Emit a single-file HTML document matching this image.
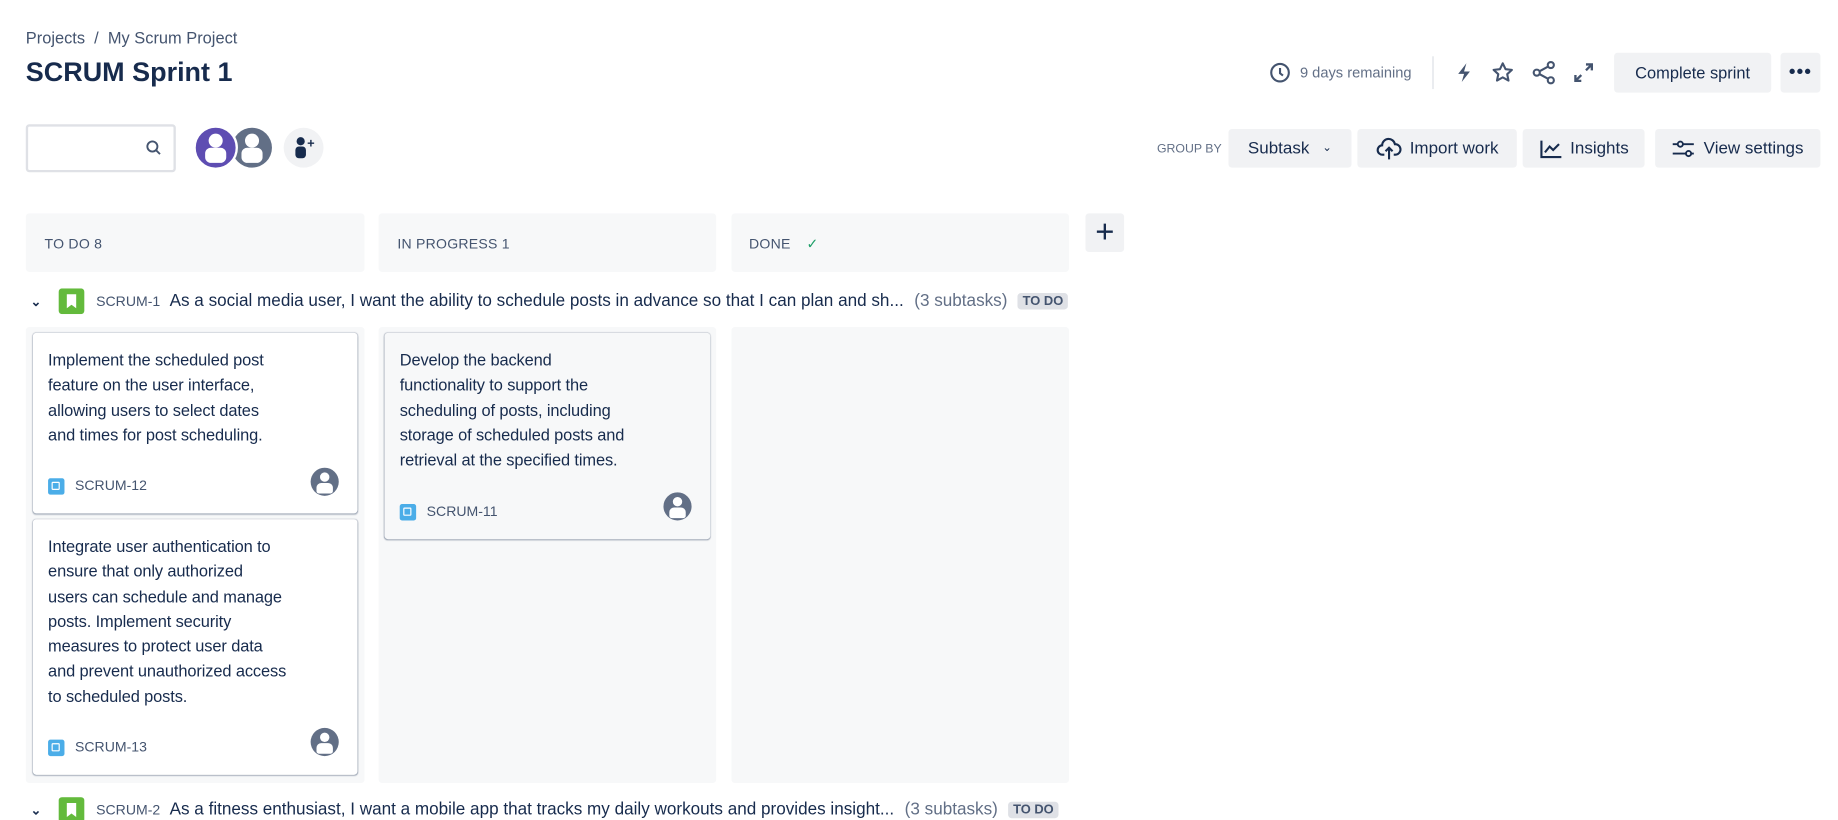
<!DOCTYPE html>
<html><head><meta charset="utf-8"><style>
html,body{margin:0;padding:0;background:#fff;overflow:hidden;width:1838px;height:820px}
#w{position:relative;width:1568px;height:700px;transform:scale(1.17219);transform-origin:0 0;font-family:"Liberation Sans",sans-serif;color:#172b4d}
.a{position:absolute}
.btn{position:absolute;background:#f1f2f4;border-radius:3px;font-size:14.5px;color:#172b4d;display:flex;align-items:center;justify-content:center;gap:7px;font-weight:500}
.col{position:absolute;background:#f7f8f9;border-radius:3px}
.hd{font-size:12px;color:#44546f;letter-spacing:.2px}
.card{position:absolute;background:#fff;border-radius:3px;box-shadow:0 1px 1px rgba(9,30,66,.25),0 0 1px rgba(9,30,66,.31);font-size:14px;line-height:21.3px;color:#172b4d}
.card p{margin:0;position:absolute;left:13px;top:13px;white-space:nowrap;letter-spacing:-.1px}
.ft{position:absolute;left:13px;font-size:12px;color:#44546f;display:flex;align-items:center;gap:9px;font-weight:500}
.st{width:14px;height:14px;background:#4bade8;border-radius:2px;position:relative}
.st:after{content:"";position:absolute;left:3px;top:3px;width:5px;height:5px;border:1.3px solid #fff;border-radius:1px}
.av{position:absolute;width:24px;height:24px;border-radius:50%;background:#626f86;overflow:hidden}
.av:before{content:"";position:absolute;left:8px;top:4px;width:8px;height:8px;border-radius:50%;background:#fff}
.av:after{content:"";position:absolute;left:5px;top:13px;width:14px;height:9px;border-radius:4px 4px 2px 2px;background:#fff}
.lane{position:absolute;left:22px;font-size:14.6px;display:flex;align-items:center;white-space:nowrap}
.loz{background:#dfe1e6;font-size:11px;font-weight:700;padding:1px 4px;border-radius:3px;color:#44546f;margin-left:9px}
</style></head><body><div id="w">
<div class="a" style="left:22px;top:24px;font-size:14px;color:#44546f">Projects &nbsp;/&nbsp; My Scrum Project</div>
<div class="a" style="left:22px;top:48px;font-size:23px;font-weight:600;color:#172b4d">SCRUM Sprint 1</div>

<svg class="a" style="left:1083px;top:53px" width="18" height="18" viewBox="0 0 18 18" fill="none" stroke="#44546f" stroke-width="1.8"><circle cx="9" cy="9" r="7.5"/><path d="M9 5v4.5l2.5 2"/></svg>
<div class="a" style="left:1109px;top:55px;font-size:12.5px;color:#626f86">9 days remaining</div>
<div class="a" style="left:1222px;top:48px;width:1px;height:28px;background:#dcdfe4"></div>
<svg class="a" style="left:1240px;top:53px" width="18" height="18" viewBox="0 0 18 18"><path d="M11 1L4 10h5l-2 7 7-9H9z" fill="#44546f"/></svg>
<svg class="a" style="left:1272px;top:52px" width="20" height="20" viewBox="0 0 20 20" fill="none" stroke="#44546f" stroke-width="1.8" stroke-linejoin="round"><path d="M10 2l2.4 5 5.4.6-4 3.7 1.1 5.4L10 14l-4.9 2.7 1.1-5.4-4-3.7L7.6 7z"/></svg>
<svg class="a" style="left:1306px;top:51px" width="22" height="22" viewBox="0 0 22 22" fill="none" stroke="#44546f" stroke-width="1.8"><circle cx="5" cy="11" r="2.6"/><circle cx="17" cy="4.5" r="2.6"/><circle cx="17" cy="17.5" r="2.6"/><path d="M7.3 9.8l7.4-4M7.3 12.2l7.4 4"/></svg>
<svg class="a" style="left:1341px;top:52px" width="20" height="20" viewBox="0 0 20 20" fill="none" stroke="#44546f" stroke-width="2"><path d="M12 3h5v5M17 3l-5 5M8 17H3v-5M3 17l5-5"/></svg>
<div class="btn" style="left:1377px;top:45px;width:134px;height:34px;font-size:14px">Complete sprint</div>
<div class="btn" style="left:1519px;top:45px;width:34px;height:34px;font-size:16px;font-weight:700;letter-spacing:1px">•••</div>

<div class="a" style="left:22px;top:106px;width:124px;height:37px;border:2px solid #dfe1e6;border-radius:3px"></div>
<svg class="a" style="left:124px;top:119px" width="14" height="14" viewBox="0 0 14 14" fill="none" stroke="#44546f" stroke-width="1.6"><circle cx="6" cy="6" r="4.3"/><path d="M9 9l3.5 3.5"/></svg>
<div class="a" style="left:198px;top:109px;width:34px;height:34px;border-radius:50%;background:#626f86"><div style="position:absolute;left:11px;top:5px;width:12px;height:12px;border-radius:50%;background:#fff"></div><div style="position:absolute;left:8px;top:17px;width:18px;height:13px;border-radius:5px;background:#fff"></div></div>
<div class="a" style="left:165px;top:107px;width:34px;height:34px;border-radius:50%;background:#5e4db2;border:2px solid #fff"><div style="position:absolute;left:11px;top:5px;width:12px;height:12px;border-radius:50%;background:#fff"></div><div style="position:absolute;left:8px;top:17px;width:18px;height:13px;border-radius:5px;background:#fff"></div></div>
<div class="a" style="left:242px;top:109px;width:34px;height:34px;border-radius:50%;background:#f1f2f4"><div style="position:absolute;left:11px;top:8px;width:7px;height:7px;border-radius:50%;background:#172b4d"></div><div style="position:absolute;left:10px;top:16px;width:9px;height:10px;border-radius:3px;background:#172b4d"></div><div style="position:absolute;left:20px;top:8px;font-size:11px;font-weight:700;color:#172b4d">+</div></div>

<div class="a" style="left:987px;top:121px;font-size:10.5px;color:#626f86">GROUP BY</div>
<div class="btn" style="left:1048px;top:110px;width:105px;height:33px">Subtask <span style="font-size:10px;margin-left:4px">&#8964;</span></div>
<div class="btn" style="left:1158px;top:110px;width:136px;height:33px"><svg width="22" height="20" viewBox="0 0 22 20" fill="none" stroke="#172b4d" stroke-width="1.8"><path d="M7 15H5.5a4 4 0 0 1-.4-8A5.5 5.5 0 0 1 16 6a4.5 4.5 0 0 1 .5 9H15"/><path d="M11 19V9M8 12l3-3 3 3"/></svg>Import work</div>
<div class="btn" style="left:1299px;top:110px;width:104px;height:33px"><svg width="20" height="18" viewBox="0 0 20 18" fill="none" stroke="#172b4d" stroke-width="1.8"><path d="M2 2v14h17M5 12l4-5 3 3 5-5"/></svg>Insights</div>
<div class="btn" style="left:1412px;top:110px;width:141px;height:33px"><svg width="20" height="18" viewBox="0 0 20 18" fill="none" stroke="#172b4d" stroke-width="1.6"><path d="M1 5h4M10 5h9M1 13h11M17 13h2"/><circle cx="7.5" cy="5" r="2.2"/><circle cx="14.5" cy="13" r="2.2"/></svg>View settings</div>

<div class="col" style="left:22px;top:182px;width:289px;height:50px"><div class="hd a" style="left:16px;top:19px">TO DO 8</div></div>
<div class="col" style="left:323px;top:182px;width:288px;height:50px"><div class="hd a" style="left:16px;top:19px">IN PROGRESS 1</div></div>
<div class="col" style="left:624px;top:182px;width:288px;height:50px"><div class="hd a" style="left:15px;top:19px">DONE <span style="color:#22a06b;margin-left:10px">&#10003;</span></div></div>
<div class="a" style="left:926px;top:182px;width:33px;height:33px;background:#f1f2f4;border-radius:3px;font-size:28px;line-height:31px;text-align:center;font-weight:300;color:#172b4d">+</div>

<div class="lane" style="top:246px"><span style="font-size:11px;width:24px;padding-left:4px;font-weight:700">&#8964;</span><svg width="22" height="22" viewBox="0 0 22 22"><rect width="22" height="22" rx="3" fill="#63ba3c"/><path d="M7 5h8v12l-4-3-4 3z" fill="#fff"/></svg><span style="margin-left:10px;font-size:12px;color:#44546f;font-weight:500">SCRUM-1</span><span style="margin-left:8px;color:#172b4d">As a social media user, I want the ability to schedule posts in advance so that I can plan and sh...</span><span style="margin-left:9px;color:#626f86">(3 subtasks)</span><span class="loz">TO DO</span></div>

<div class="col" style="left:22px;top:279px;width:289px;height:389px"></div>
<div class="col" style="left:323px;top:279px;width:288px;height:389px"></div>
<div class="col" style="left:624px;top:279px;width:288px;height:389px"></div>

<div class="card" style="left:28px;top:284px;width:277px;height:154px"><p>Implement the scheduled post<br>feature on the user interface,<br>allowing users to select dates<br>and times for post scheduling.</p><div class="ft" style="top:120px"><div class="st"></div>SCRUM-12</div><div class="av" style="left:237px;top:115px"></div></div>
<div class="card" style="left:28px;top:443px;width:277px;height:218px"><p>Integrate user authentication to<br>ensure that only authorized<br>users can schedule and manage<br>posts. Implement security<br>measures to protect user data<br>and prevent unauthorized access<br>to scheduled posts.</p><div class="ft" style="top:184px"><div class="st"></div>SCRUM-13</div><div class="av" style="left:237px;top:178px"></div></div>
<div class="card" style="left:328px;top:284px;width:278px;height:176px;background:#f7f8f9"><p>Develop the backend<br>functionality to support the<br>scheduling of posts, including<br>storage of scheduled posts and<br>retrieval at the specified times.</p><div class="ft" style="top:142px"><div class="st"></div>SCRUM-11</div><div class="av" style="left:238px;top:136px"></div></div>

<div class="lane" style="top:680px"><span style="font-size:11px;width:24px;padding-left:4px;font-weight:700">&#8964;</span><svg width="22" height="22" viewBox="0 0 22 22"><rect width="22" height="22" rx="3" fill="#63ba3c"/><path d="M7 5h8v12l-4-3-4 3z" fill="#fff"/></svg><span style="margin-left:10px;font-size:12px;color:#44546f;font-weight:500">SCRUM-2</span><span style="margin-left:8px;color:#172b4d">As a fitness enthusiast, I want a mobile app that tracks my daily workouts and provides insight...</span><span style="margin-left:9px;color:#626f86">(3 subtasks)</span><span class="loz">TO DO</span></div>
</div></body></html>
